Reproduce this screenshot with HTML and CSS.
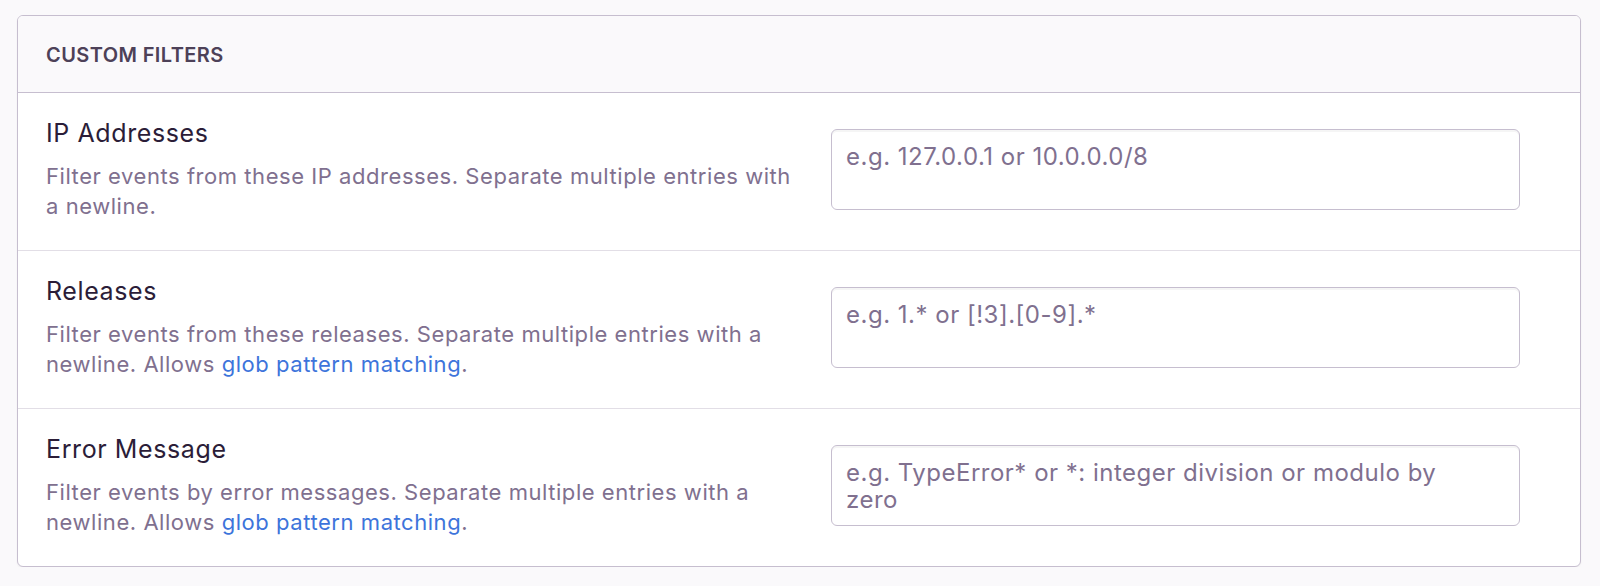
FILE: index.html
```html
<!DOCTYPE html>
<html lang="en">
<head>
<meta charset="utf-8">
<title>Custom Filters</title>
<link rel="stylesheet" href="styles.css">
</head>
<body>
<div class="panel">
  <div class="panel-header">Custom Filters</div>
  <div class="field">
    <div class="field-desc">
      <div class="field-label">IP Addresses</div>
      <div class="field-help">Filter events from these IP addresses. Separate multiple entries with a newline.</div>
    </div>
    <div class="field-control">
      <textarea class="input" placeholder="e.g. 127.0.0.1 or 10.0.0.0/8"></textarea>
    </div>
  </div>
  <div class="field">
    <div class="field-desc">
      <div class="field-label">Releases</div>
      <div class="field-help">Filter events from these releases. Separate multiple entries with a newline. Allows <a href="#">glob pattern matching</a>.</div>
    </div>
    <div class="field-control">
      <textarea class="input" placeholder="e.g. 1.* or [!3].[0-9].*"></textarea>
    </div>
  </div>
  <div class="field">
    <div class="field-desc">
      <div class="field-label">Error Message</div>
      <div class="field-help">Filter events by error messages. Separate multiple entries with a newline. Allows <a href="#">glob pattern matching</a>.</div>
    </div>
    <div class="field-control">
      <textarea class="input" placeholder="e.g. TypeError* or *: integer division or modulo by&#10;zero"></textarea>
    </div>
  </div>
</div>
</body>
</html>
```
FILE: styles.css
```css
* { box-sizing: border-box; }
html, body {
  margin: 0;
  background: #faf9fb;
}
body {
  padding: 15px 19px 0 17px;
  font-family: Inter, "Noto Sans", sans-serif;
  color: #2b1d38;
}
.panel {
  background: #fff;
  border: 1px solid #c6becf;
  border-radius: 6px;
  box-shadow: 0 1px 2px rgba(0,0,0,0.05);
  overflow: hidden;
}
.panel-header {
  height: 77px;
  display: flex;
  align-items: center;
  padding: 1px 28px 0;
  background: #faf9fb;
  border-bottom: 1px solid #c6becf;
  color: #4d4158;
  font-size: 20px;
  font-weight: 600;
  letter-spacing: 0.4px;
  text-transform: uppercase;
}
.field {
  display: flex;
  align-items: center;
  padding: 25px 60px 29px 28px;
  border-bottom: 1px solid #e2dee6;
}
.field:last-child { border-bottom: none; }
.field-desc {
  width: 752px;
  flex: none;
}
.field-label {
  font-size: 25px;
  line-height: 30px;
  letter-spacing: 0.6px;
  color: #2b1d38;
}
.field-help {
  margin-top: 13px;
  font-size: 22px;
  line-height: 30px;
  letter-spacing: 0.55px;
  color: #80708f;
}
.field-help a {
  color: #3d74db;
  text-decoration: none;
}
.field-control {
  flex: 1;
  padding-left: 33px;
}
.input {
  display: block;
  width: 100%;
  height: 81px;
  resize: none;
  border: 1px solid #c6becf;
  border-radius: 6px;
  box-shadow: inset 0 2px 0 rgba(0,0,0,0.04);
  padding: 13px 14px;
  font-family: inherit;
  font-size: 24px;
  line-height: 27px;
  letter-spacing: 0.5px;
  color: #2b1d38;
  background: #fff;
  overflow: hidden;
}
.input::placeholder {
  color: #80708f;
  opacity: 1;
}
```
